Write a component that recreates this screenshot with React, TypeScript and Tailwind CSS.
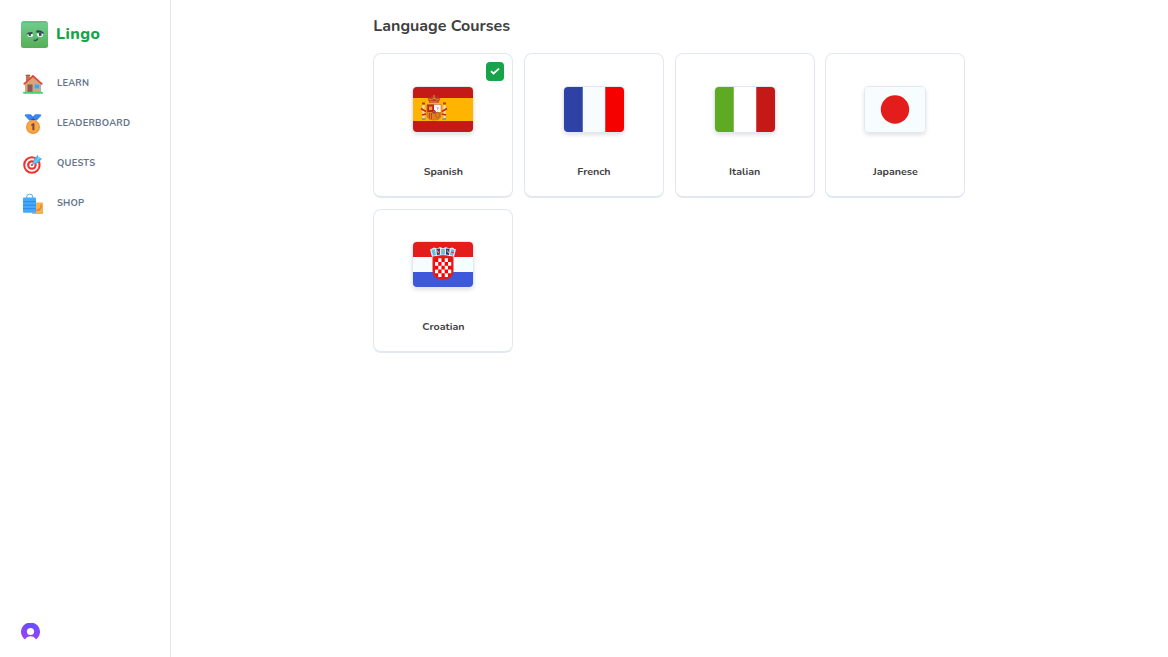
import type { ReactNode } from "react";

function Mascot() {
  return (
    <svg viewBox="0 0 27 27" className="h-[27px] w-[27px]">
      <defs>
        <linearGradient id="mascot" x1="0" y1="0" x2="0" y2="1">
          <stop offset="0" stopColor="#6fcf91" />
          <stop offset="1" stopColor="#56ae57" />
        </linearGradient>
      </defs>
      <rect width="27" height="27" rx="2.5" fill="url(#mascot)" />
      <path d="M1 1.2Q2 .3 4 .3H23Q25 .3 26 1.2L25 2H2Z" fill="#55b97b" opacity=".6" />
      <path d="M6 13.2h6v2q-3.2 1.4-5.2 0Z" fill="#eef6f5" />
      <path d="M15.6 12.4h6.6l-.6 3.1q-2.9 1.2-5.1-.3Z" fill="#eef6f5" />
      <path d="M5 13.3q2.5-2.6 6.4-2.3v1.7L9.8 13v1.9H7.8v-1.7Z" fill="#344554" />
      <path d="M15.3 9.6q4-1.2 7.2 1.6v1.7q-3.5-2-7.2-1.2Z" fill="#344554" />
      <path d="M18 12h2.5v2.9H18Z" fill="#344554" />
      <path d="M13.2 19.3q2.2.6 3.4-1.4" fill="none" stroke="#344554" strokeWidth="1.4" strokeLinecap="round" />
    </svg>
  );
}

function House() {
  return (
    <svg viewBox="0 0 22 22" className="h-[22px] w-[22px]">
      <path d="M4 2.2h3.8V10H4Z" fill="#b97850" />
      <path d="M3.6 1.7h4.6v1.2H3.6Z" fill="#9c5a3d" />
      <path d="M3 10 11 3l8 7v9H3Z" fill="#d8a57a" />
      <path d="M1.7 11.3 11 3l9.3 8.3" fill="none" stroke="#e0483a" strokeWidth="1.7" />
      <rect x="5.5" y="11.5" width="5" height="7.8" fill="#8b5a50" />
      <rect x="12.3" y="11.2" width="5" height="4.6" fill="#36a7f1" stroke="#a7b6c5" strokeWidth=".5" />
      <rect x="1" y="18.8" width="20" height="1.9" rx=".9" fill="#43d17c" />
    </svg>
  );
}

function Medal() {
  return (
    <svg viewBox="0 0 22 22" className="h-[22px] w-[22px]">
      <path d="M3.6 1.3h5.2L11 3.6l2.2-2.3h5.2l1 1.3-4.7 5H7.3l-4.7-5Z" fill="#3985ef" />
      <path d="M8.5 7 11 4.7 13.5 7Z" fill="#2458c5" />
      <circle cx="11" cy="14" r="7" fill="#e9932f" />
      <circle cx="11" cy="13.8" r="5.9" fill="#f8a944" />
      <path d="M9.2 11.4 11 10.2h1.4v7h-2v-4.8l-1.2.6Z" fill="#843b4b" />
    </svg>
  );
}

function Target() {
  return (
    <svg viewBox="0 0 22 22" className="h-[22px] w-[22px]">
      <circle cx="9.9" cy="12" r="7.7" fill="#fff" stroke="#f2302c" strokeWidth="2" />
      <circle cx="9.9" cy="12" r="3.7" fill="#fff" stroke="#f2302c" strokeWidth="2.2" />
      <circle cx="9.9" cy="12" r=".9" fill="#f2302c" />
      <path d="m9.7 12.5 4-5" stroke="#3677bd" strokeWidth="1.1" />
      <path d="m11 11 .8-4.7L16 1.7l.6 3.1 3.7.8-4.6 4.6Z" fill="#46b7f3" />
      <path d="m12 10 5.7-5.7" stroke="#75d5ff" strokeWidth="1.2" />
    </svg>
  );
}

function Bags() {
  return (
    <svg viewBox="0 0 22 22" className="h-[22px] w-[22px]">
      <rect x="10" y="9.5" width="11" height="11.5" rx=".6" fill="#fbb14a" />
      <path d="M19.2 11.5c.3 4-2 6-5 5.8" fill="none" stroke="#e07a3d" strokeWidth="1.2" />
      <path d="M4.5 6V4.5a3.2 3.4 0 0 1 6.4 0V6" fill="none" stroke="#4bb5ea" strokeWidth="1" />
      <rect x="1" y="4.6" width="13" height="15.1" rx=".8" fill="#45aafa" />
      <path d="M1 8.7h13M1 12.2h13M1 15.7h13" stroke="#2f87e2" strokeWidth="1" />
    </svg>
  );
}

function SpainFlag() {
  return (
    <svg viewBox="0 0 60 45" className="block h-full w-full">
      <path fill="#c51918" d="M0 0h60v45H0z" />
      <path fill="#ffb400" d="M0 11h60v23H0z" />
      <path d="M10.5 18v14M31.5 18v14" stroke="#e6dcca" strokeWidth="2.2" />
      <path d="M9 16.5h3M30 16.5h3" stroke="#a3472a" strokeWidth="2" />
      <path d="M9 32h3.5M29.5 32H33" stroke="#8e7f8a" strokeWidth="1.6" />
      <path d="m8 21.5 5 3M34 21.5l-5 3M9 28l4-1M33 28l-4-1" fill="none" stroke="#c9241c" strokeWidth="1.5" />
      <path d="M14 17.5h14V28q0 5-7 5t-7-5Z" fill="#e2801f" stroke="#b8703a" strokeWidth=".8" />
      <path d="M14.3 17.8H21V25h-6.7Z" fill="#c2251f" />
      <path d="M21 17.8h6.7V25H21Z" fill="#f9f4f5" />
      <path d="M16 19.5h3.2V23H16Z" fill="#dda03a" />
      <path d="m23.8 20 2 .8-1.3 2.4Z" fill="#c89abc" />
      <path d="M16.5 26v5.5m2-5.5v6.3" stroke="#bb3b1e" strokeWidth=".9" />
      <ellipse cx="24.5" cy="28" rx="2" ry="2.8" fill="none" stroke="#b45e22" strokeWidth=".9" />
      <circle cx="21" cy="24.8" r="1.5" fill="#6270a6" stroke="#c51918" strokeWidth=".8" />
      <path d="m14.8 11.5 1.7 4.5h9l1.7-4.5-3-1.5L21 9.5l-3.2.5Z" fill="#c33a20" />
      <path d="M16.5 15h9M16 12l2.3 1 2.7-2 2.7 2 2.3-1M21 8v2.5" fill="none" stroke="#d79b32" strokeWidth="1" />
    </svg>
  );
}

function CroatiaFlag() {
  const squares = Array.from({ length: 25 }, (_, index) => index).filter((index) => index % 2 === 1);
  return (
    <svg viewBox="0 0 60 45" className="block h-full w-full">
      <path fill="#e31d1c" d="M0 0h60v15H0z" />
      <path fill="#f7fcff" d="M0 15h60v15H0z" />
      <path fill="#3d58db" d="M0 30h60v15H0z" />
      <path d="m17 7.5 4-2 3 1L27 5l3 1.2L33 5l3 1.5 3-1 4 2-2 7.5q-11-3-22 0Z" fill="#d4edf7" />
      <path d="m18.5 8 3-1 1.5 6-3 .8Z" fill="#67bde0" />
      <path d="m23.500 7 3.5-.5v6l-3 .5Z" fill="#263c8a" />
      <path d="M28.2 7H31.8v5.5H28.2Z" fill="#67b6dd" />
      <path d="m33 6.5 3.5.5-.5 6-3-.5Z" fill="#263c8a" />
      <path d="m38.5 7 3 1-1.5 5.8-3-.8Z" fill="#67bde0" />
      <path d="M24 8.5 26 11m8-2.5 2 2.5m-7-2h2" stroke="#edb72a" strokeWidth="1.2" />
      <path d="m38 10 3 .8M26.5 8v4" stroke="#e31d1c" strokeWidth=".9" />
      <path d="M19.5 14.8q10.5-3 21 0V29q0 8.5-10.5 8.5T19.5 29Z" fill="#e31d1c" />
      <path d="M21.8 16.8h16.4V30q0 5.4-8.2 5.4T21.8 30Z" fill="#f00" />
      {squares.map((index) => (
        <rect key={index} x={22 + (index % 5) * 3.25} y={16.3 + Math.floor(index / 5) * 3.75} width="3.2" height="3.7" fill="#fff" />
      ))}
    </svg>
  );
}

function Tricolor({ left, center, right }: { left: string; center: string; right: string }) {
  return (
    <svg viewBox="0 0 60 45" className="block h-full w-full">
      <path fill={center} d="M0 0h60v45H0z" />
      <path fill={left} d="M0 0h18.75v45H0z" />
      <path fill={right} d="M41.25 0H60v45H41.25z" />
    </svg>
  );
}

function JapanFlag() {
  return (
    <svg viewBox="0 0 60 45" className="block h-full w-full">
      <path fill="#f7fcff" d="M0 0h60v45H0z" />
      <circle cx="30" cy="22.5" r="14.2" fill="#e31d1c" />
    </svg>
  );
}

const links: { label: string; icon: ReactNode }[] = [
  { label: "LEARN", icon: <House /> },
  { label: "LEADERBOARD", icon: <Medal /> },
  { label: "QUESTS", icon: <Target /> },
  { label: "SHOP", icon: <Bags /> },
];

const courses: { title: string; flag: ReactNode; active?: boolean }[] = [
  { title: "Spanish", flag: <SpainFlag />, active: true },
  { title: "French", flag: <Tricolor left="#2e42a5" center="#f7fcff" right="#f50100" /> },
  { title: "Italian", flag: <Tricolor left="#5eaa22" center="#fff" right="#c51918" /> },
  { title: "Japanese", flag: <JapanFlag /> },
  { title: "Croatian", flag: <CroatiaFlag /> },
];

export default function App() {
  return (
    <div className="flex h-screen overflow-hidden bg-white font-['Nunito','Open_Sans',sans-serif]">
      <aside className="flex w-[171px] shrink-0 flex-col border-r border-slate-200 px-[21px] pt-[21px] pb-[15px]">
        <div className="flex h-[27px] items-center gap-2">
          <Mascot />
          <span className="text-[16px] leading-[27px] font-extrabold tracking-[0.4px] text-[#16a34a]">Lingo</span>
        </div>
        <nav className="mt-[15px] flex flex-col">
          {links.map((link) => (
            <a key={link.label} className="flex h-10 items-center gap-[13px] pl-px">
              <span className="mt-px">{link.icon}</span>
              <span className="pt-[2px] text-[9.33px] leading-none font-bold tracking-[0.233px] text-[#64748b]">{link.label}</span>
            </a>
          ))}
        </nav>
        <div className="mt-auto h-[19px] w-[19px]">
          <svg viewBox="0 0 19 19" className="block h-[19px] w-[19px]">
            <defs>
              <radialGradient id="avatar" cx=".55" cy=".2" r=".8">
                <stop offset="0" stopColor="#6250ff" />
                <stop offset="1" stopColor="#9a42f5" />
              </radialGradient>
            </defs>
            <path d="M4 16.4A9.5 9.3 0 1 1 15 16.4Q13 13.2 9.5 13.2T4 16.4Z" fill="url(#avatar)" />
            <circle cx="9.5" cy="8.5" r="3.6" fill="#fff" />
          </svg>
        </div>
      </aside>
      <main className="flex-1 pt-[15px]">
        <div className="ml-[202.33px] w-[592px]">
          <h1 className="h-[22px] text-[16px] leading-[22px] font-bold text-[#404040]">Language Courses</h1>
          <div className="mt-4 grid grid-cols-4 gap-x-[10.67px] gap-y-[11px]">
            {courses.map((course) => (
              <div
                key={course.title}
                className="relative flex h-[144.6px] flex-col items-center rounded-lg border border-b-2 border-slate-200 pt-8"
              >
                {course.active && (
                  <div className="absolute top-2 right-2 flex h-[19px] w-[18px] items-center justify-center rounded-[4px] bg-[#16a34a]">
                    <svg viewBox="0 0 12 12" className="mb-px h-3 w-3">
                      <path d="m2 6.1 2.5 2.4L10 3.6" fill="none" stroke="#fff" strokeWidth="1.8" />
                    </svg>
                  </div>
                )}
                <div className="-mt-[0.2px] h-[47px] w-[62px] overflow-hidden rounded-[5px] border border-slate-200 shadow-[0_2px_4px_rgba(0,0,0,0.12)]">
                  {course.flag}
                </div>
                <p className="mt-[31px] text-[10.67px] leading-4 font-bold text-[#404040]">{course.title}</p>
              </div>
            ))}
          </div>
        </div>
      </main>
    </div>
  );
}
